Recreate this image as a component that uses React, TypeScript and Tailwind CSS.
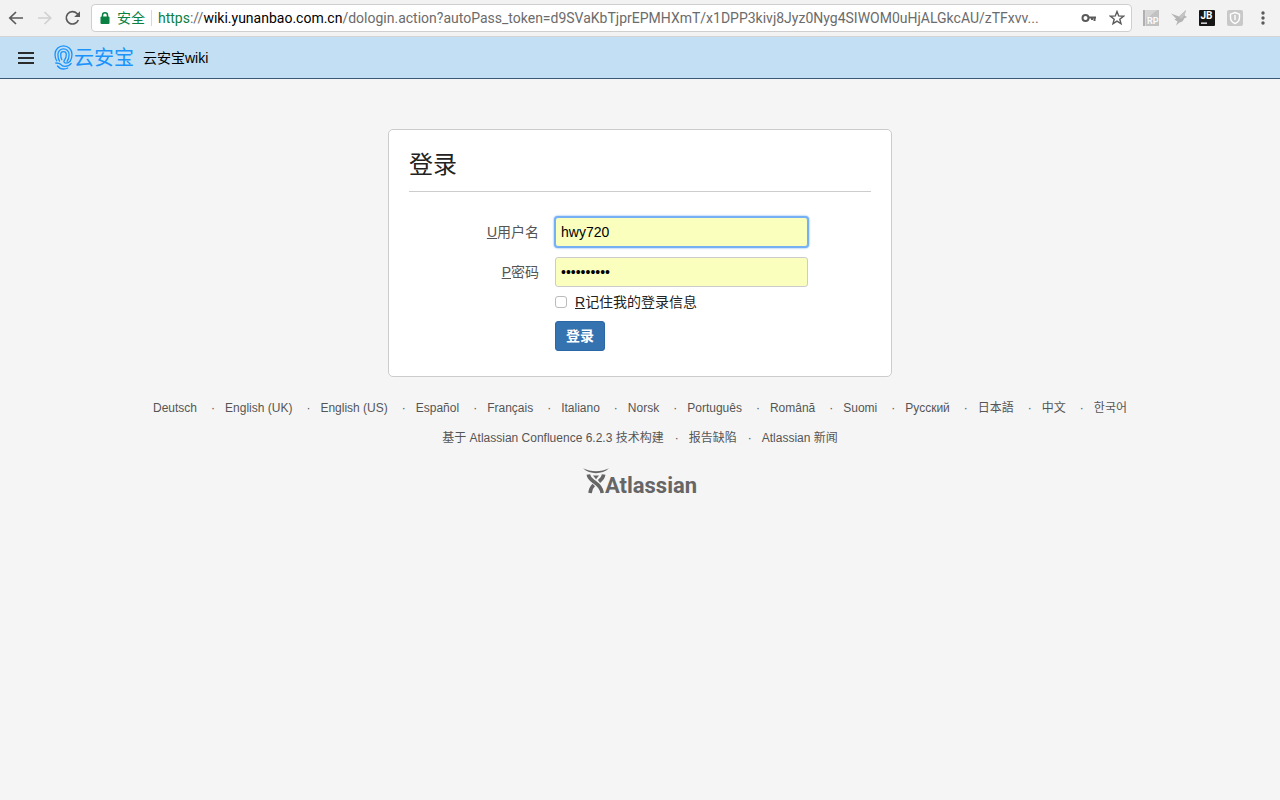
import { useState } from "react";
import type { ReactNode } from "react";

const languages = [
  "Deutsch",
  "English (UK)",
  "English (US)",
  "Español",
  "Français",
  "Italiano",
  "Norsk",
  "Português",
  "Română",
  "Suomi",
  "Русский",
  "日本語",
  "中文",
  "한국어",
];

const footerLinks = ["基于 Atlassian Confluence 6.2.3 技术构建", "报告缺陷", "Atlassian 新闻"];

function ToolButton({ label, children }: { label: string; children: ReactNode }) {
  return (
    <button type="button" aria-label={label} className="flex h-5 w-5 shrink-0 items-center justify-center">
      {children}
    </button>
  );
}

function BrowserBar() {
  return (
    <div className="flex h-[37px] items-center border-b border-[#d4d4d4] bg-[#f2f2f2] pr-[7px] pl-[6px]">
      <div className="flex items-center gap-2 pr-2">
        <ToolButton label="Back">
          <svg width="20" height="20" viewBox="0 0 20 20" fill="none" stroke="#5a5a5a" strokeWidth="1.7">
            <path d="M17 10H4M10 4l-6.2 6 6.2 6" />
          </svg>
        </ToolButton>
        <ToolButton label="Forward">
          <svg width="20" height="20" viewBox="0 0 20 20" fill="none" stroke="#d0d0d0" strokeWidth="1.7">
            <path d="M4 10h13M10.5 4l6.2 6-6.2 6" />
          </svg>
        </ToolButton>
        <ToolButton label="Reload">
          <svg width="20" height="20" viewBox="0 0 20 20">
            <path d="M16.3 12a6.2 6.2 0 1 1-1.3-6.5l1.7 1.8" fill="none" stroke="#5a5a5a" strokeWidth="1.7" />
            <path d="M18 3.2v5.8h-5.8z" fill="#5a5a5a" />
          </svg>
        </ToolButton>
      </div>

      {/* Address bar */}
      <div className="ml-px flex h-7 min-w-0 flex-1 items-center rounded border border-[#cfcfcf] bg-white pr-1 pl-2">
        <svg className="shrink-0" width="10" height="12" viewBox="0 0 10 12">
          <path d="M2.5 6V3.3a2.5 2.5 0 0 1 5 0V6" fill="none" stroke="#0b8043" strokeWidth="1.5" />
          <rect x="0.5" y="4.5" width="9" height="7.5" rx="1" fill="#0b8043" />
        </svg>
        <span className="ml-[7px] shrink-0 text-sm text-[#0b8043]">安全</span>
        <span className="mx-[6px] h-4 w-px shrink-0 bg-[#d8d8d8]" />
        <div className="min-w-0 flex-1 truncate font-['Roboto','Noto_Sans_CJK_SC',sans-serif] text-sm text-[#6b6b6b]">
          <span className="text-[#0b8043]">https</span>://<span className="text-black">wiki.yunanbao.com.cn</span>
          /dologin.action?autoPass_token=d9SVaKbTjprEPMHXmT/x1DPP3kivj8Jyz0Nyg4SIWOM0uHjALGkcAU/zTFxvv...
        </div>
        <div className="flex items-center gap-2 pl-2">
          <ToolButton label="Saved password">
            <svg width="16" height="16" viewBox="0 0 16 16" fill="none" stroke="#5a5a5a" strokeWidth="2">
              <circle cx="4.5" cy="8" r="3" />
              <path d="M7.5 7.5H15M13.5 7.5v3.5M11 7.5v2.5" />
            </svg>
          </ToolButton>
          <ToolButton label="Bookmark">
            <svg width="16" height="16" viewBox="0 0 16 16" fill="none" stroke="#5a5a5a" strokeWidth="1.4">
              <path d="M8 1.5l1.7 4.4 4.8.3-3.7 3 1.2 4.6L8 11.2l-4 2.6 1.2-4.6-3.7-3 4.8-.3z" />
            </svg>
          </ToolButton>
        </div>
      </div>

      {/* Extensions */}
      <div className="flex items-center gap-2 pl-[9px]">
        <ToolButton label="Axure RP">
          <svg width="16" height="16" viewBox="0 0 16 16">
            <path d="M0 0h2v16H0z" fill="#b0b0b0" />
            <path d="M2.5 0H16v16H2.5z" fill="#c2c2c2" />
            <path d="M2.5 0H14L3.5 9z" fill="#d4d4d4" />
            <text x="4" y="14" fontSize="9" fontWeight="700" fill="#fafafa" fontFamily="Roboto, sans-serif">RP</text>
          </svg>
        </ToolButton>
        <ToolButton label="Bird">
          <svg width="16" height="16" viewBox="0 0 16 16">
            <path d="M0 3.5l8 3L15 0l-1.500 5.500L16 7l-3 1.500c-.5 2.500-2 3.500-4.500 4L5 15.500 6.500 11.500 3.500 9.500 5 8.500z" fill="#b4b4b4" />
            <path d="M8 6.500L15 0l-1.500 5.500L10 9z" fill="#c4c4c4" />
          </svg>
        </ToolButton>
        <ToolButton label="JetBrains">
          <svg width="16" height="16" viewBox="0 0 16 16">
            <rect width="16" height="16" rx="1" fill="#161616" />
            <text x="1.5" y="9" fontSize="10" fontWeight="700" fill="#fff" fontFamily="Roboto, sans-serif">JB</text>
            <path d="M2 12.500h6v1.300H2z" fill="#fff" />
          </svg>
        </ToolButton>
        <ToolButton label="Shield">
          <svg width="16" height="16" viewBox="0 0 16 16">
            <rect width="16" height="16" rx="2" fill="#c8c8c8" />
            <path d="M8 2.500l4.500 1.700v3.300c0 3-2 5-4.500 6-2.500-1-4.500-3-4.500-6V4.200z" fill="none" stroke="#fff" strokeWidth="1.4" />
            <path d="M8 5v5" stroke="#fff" strokeWidth="1.4" />
          </svg>
        </ToolButton>
        <ToolButton label="Menu">
          <svg width="16" height="16" viewBox="0 0 16 16" fill="#5a5a5a">
            <circle cx="8" cy="3" r="1.7" />
            <circle cx="8" cy="8" r="1.7" />
            <circle cx="8" cy="13" r="1.7" />
          </svg>
        </ToolButton>
      </div>
    </div>
  );
}

function SiteHeader() {
  return (
    <header className="flex h-[42px] items-center border-b border-[#3b5775] bg-[#c2dff4] px-4">
      <button type="button" aria-label="Menu" className="flex h-6 w-5 items-center justify-center">
        <svg width="16" height="12" viewBox="0 0 16 12" fill="#2b2b2b">
          <path d="M0 0h16v2H0zM0 5h16v2H0zM0 10h16v2H0z" />
        </svg>
      </button>
      <a href="#" className="ml-[18px] flex items-center">
        {/* Fingerprint mark */}
        <svg width="19" height="25" viewBox="0 0 19 25" fill="none" stroke="#1b93fb" strokeWidth="1.3" strokeLinecap="round">
          <path d="M2.7 15.8C1.3 13.8 1 12 1 9.300a8.500 8.500 0 0 1 17 0c0 2.700-.5 4.700-1.700 6.500" />
          <path d="M5.500 16C4 14 3.900 12 3.900 9.500a5.600 5.600 0 0 1 11.200 0c0 2.800-.3 4.800-2 6.700" />
          <path d="M7.800 14.500C6.700 13 6.700 11.500 6.700 9.500a2.800 2.800 0 0 1 5.600 0c0 2.300-.3 3.800-1.600 5.200-1.500 1.700-.8 3.400 1.200 3.400 1.800 0 3.200-.6 4.300-2" />
          <path d="M1.800 18c2.800 0 4.300.3 5.200 1.700.8 1.200 1.900 1.700 3.800 1.700 2.700 0 4.900-1 6.400-3" />
          <path d="M3.500 21c1.600 2 3.600 3 6 3 1.800 0 3-.3 4.200-1" />
        </svg>
        <span className="ml-px text-xl leading-6 text-[#1b93fb]">云安宝</span>
        <span className="ml-[9px] text-sm text-black">云安宝wiki</span>
      </a>
    </header>
  );
}

function LoginForm() {
  const [username, setUsername] = useState("hwy720");
  const [password, setPassword] = useState("password12");

  return (
    <section className="w-full max-w-[504px] rounded-[5px] border border-[#ccc] bg-white px-5 pt-5 pb-[25px]">
      <h1 className="border-b border-[#ccc] pb-[11px] text-2xl leading-[30px] text-[#222]">登录</h1>
      <form className="mt-[25px] text-sm" onSubmit={(e) => e.preventDefault()}>
        <div className="flex items-center">
          <label htmlFor="username" className="w-[130px] text-right text-[#555]">
            <u>U</u>用户名
          </label>
          <input
            id="username"
            type="text"
            value={username}
            onChange={(e) => setUsername(e.target.value)}
            className="ml-4 h-[30px] w-[253px] rounded-[3px] border border-[#76b0f4] bg-[#faffbd] px-[5px] text-black shadow-[0_0_2px_1px_#5a9ef0] ring-1 ring-[#76b0f4] outline-none"
          />
        </div>
        <div className="mt-[10px] flex items-center">
          <label htmlFor="password" className="w-[130px] text-right text-[#555]">
            <u>P</u>密码
          </label>
          <input
            id="password"
            type="password"
            value={password}
            onChange={(e) => setPassword(e.target.value)}
            className="ml-4 h-[30px] w-[253px] rounded-[3px] border border-[#ccc] bg-[#faffbd] px-[5px] text-black outline-none"
          />
        </div>
        <div className="mt-[5px] ml-[146px] flex h-5 items-center">
          <input
            id="remember"
            type="checkbox"
            className="h-3 w-3 appearance-none rounded-[3px] border border-[#bbb] bg-white checked:bg-[#3572b0]"
          />
          <label htmlFor="remember" className="ml-2 text-[#222]">
            <u>R</u>记住我的登录信息
          </label>
        </div>
        <button
          type="submit"
          className="mt-[9px] ml-[146px] block h-[30px] rounded-[3px] border border-[#2a67a5] bg-[#3572b0] px-[10px] font-bold text-white"
        >
          登录
        </button>
      </form>
    </section>
  );
}

function AtlassianLogo() {
  return (
    <a href="#" className="mt-5 flex items-end text-[#666]">
      <svg width="26" height="26" viewBox="0 0 26 26">
        <path d="M0 .3C8 4.300 18 4.300 26 .3 19 6.800 7 6.800 0 .3z" fill="#666" />
        <path
          d="M5.300 6.500c.7 4.500 3.200 5.500 6.700 8 4 2.800 6.500 5.500 7.200 10.500M20.700 6.500c-.5 3.500-2 5-4.700 7M10.800 17C8.500 19 7.500 21 7 25"
          fill="none"
          stroke="#666"
          strokeWidth="3.6"
        />
        <path d="M10 7.500h6l-3 3.800z" fill="#666" />
      </svg>
      <span className="-ml-1 font-['Roboto','Liberation_Sans',sans-serif] text-[22px] leading-4 font-bold">Atlassian</span>
    </a>
  );
}

export default function App() {
  return (
    <div className="min-h-screen bg-[#f5f5f5] font-['Liberation_Sans','Noto_Sans_CJK_SC','Noto_Sans_CJK_KR',sans-serif]">
      <BrowserBar />
      <SiteHeader />
      <main className="flex justify-center px-4 pt-[50px]">
        <LoginForm />
      </main>
      <footer className="flex flex-col items-center px-4 pt-[21px] text-xs leading-5 text-[#555]">
        <ul className="flex flex-wrap justify-center">
          {languages.map((name, i) => (
            <li key={name} className="flex">
              {i > 0 && <span className="mr-[10px] ml-[14px]">·</span>}
              <a href="#">{name}</a>
            </li>
          ))}
        </ul>
        <ul className="mt-[10px] flex flex-wrap justify-center">
          {footerLinks.map((name, i) => (
            <li key={name} className="flex">
              {i > 0 && <span className="mr-[10px] ml-[11px]">·</span>}
              <a href="#">{name}</a>
            </li>
          ))}
        </ul>
        <AtlassianLogo />
      </footer>
    </div>
  );
}
